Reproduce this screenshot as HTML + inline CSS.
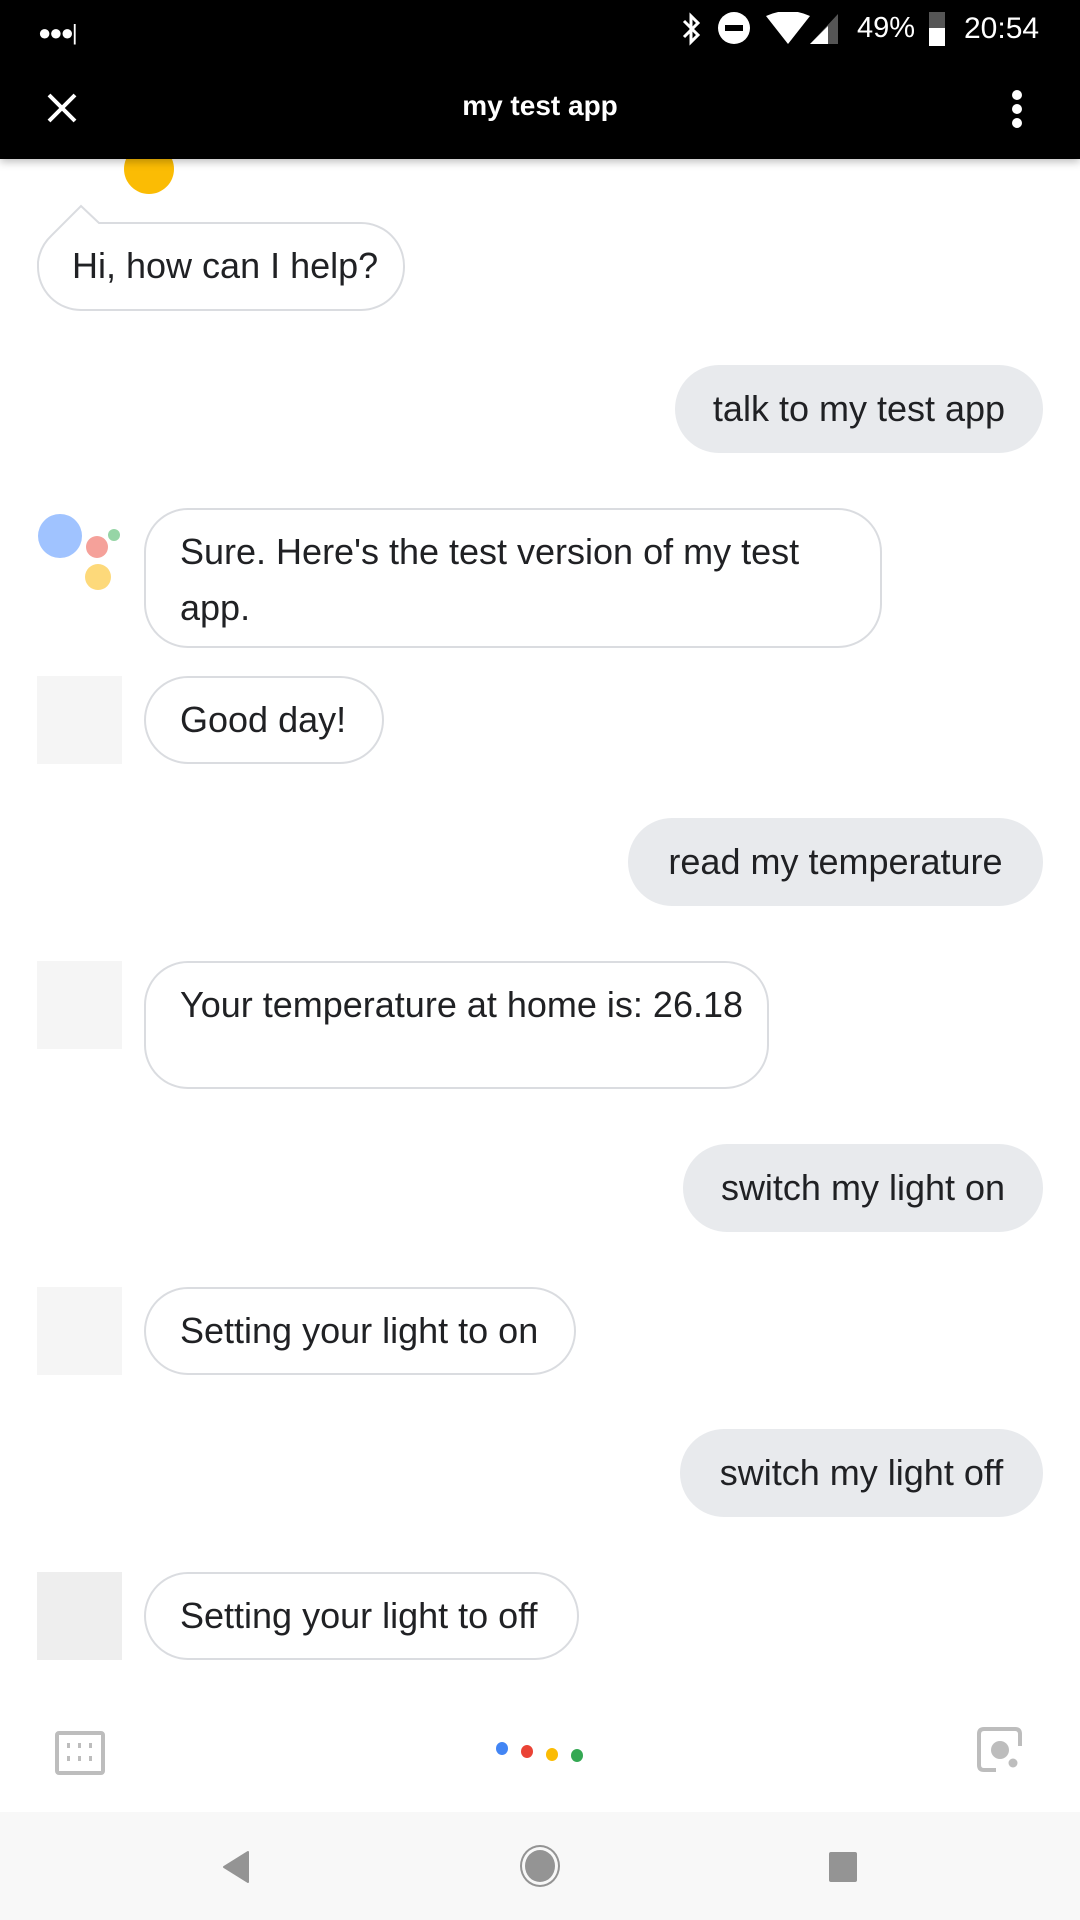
<!DOCTYPE html>
<html><head><meta charset="utf-8">
<style>
*{margin:0;padding:0;box-sizing:border-box}
body{width:1080px;height:1920px;position:relative;background:#fff;font-family:"Liberation Sans",sans-serif;overflow:hidden;color:#202124}
.abs{position:absolute}
.bot{position:absolute;border:2px solid #dadce0;border-radius:44px;background:#fff;font-size:36px;padding:0 34px;line-height:52px;white-space:nowrap}
.user{position:absolute;background:#e8eaed;border-radius:44px;font-size:36px;display:flex;align-items:center;justify-content:center;white-space:nowrap}
.sq{position:absolute;left:37px;width:85px;height:88px;background:#f5f5f5}
.dot{position:absolute;border-radius:50%}
</style></head><body>
<!-- yellow dot -->
<div class="dot" style="left:124px;top:144px;width:50px;height:50px;background:#fbbc04"></div>
<div class="abs" style="left:0;top:0;width:1080px;height:159px;background:#000;box-shadow:0 3px 8px rgba(0,0,0,.25)"></div>
<!-- status -->
<div class="abs" style="left:38px;top:20px;color:#fff;font-size:22px;letter-spacing:-2px">●●●|</div>
<svg class="abs" style="left:676px;top:12px" width="30" height="34" viewBox="0 0 30 34"><path d="M8 9 L22 23 L15 30 L15 4 L22 11 L8 25" fill="none" stroke="#fff" stroke-width="3"/></svg>
<div class="dot" style="left:718px;top:12px;width:32px;height:32px;background:#fff"></div>
<div class="abs" style="left:725px;top:25px;width:18px;height:6px;background:#000"></div>
<svg class="abs" style="left:764px;top:12px" width="48" height="34"><path d="M2 4 Q24 -6 46 4 L24 32 Z" fill="#fff"/></svg>
<svg class="abs" style="left:808px;top:12px" width="32" height="34"><path d="M30 2 L30 32 L2 32 Z" fill="#555"/><path d="M20 14 L20 32 L2 32 Z" fill="#fff"/></svg>
<div class="abs" style="left:857px;top:12px;color:#fff;font-size:29px">49%</div>
<div class="abs" style="left:929px;top:12px;width:16px;height:34px;background:#fff"></div>
<div class="abs" style="left:929px;top:12px;width:16px;height:16px;background:#555"></div>
<div class="abs" style="left:964px;top:12px;color:#fff;font-size:30px">20:54</div>
<!-- header -->
<svg class="abs" style="left:46px;top:92px" width="32" height="32"><path d="M3 3 L29 29 M29 3 L3 29" stroke="#fff" stroke-width="4"/></svg>
<div class="abs" style="left:0;width:1080px;top:90px;text-align:center;color:#fff;font-size:28px;font-weight:bold">my test app</div>
<div class="dot" style="left:1012px;top:90px;width:10px;height:10px;background:#fff"></div>
<div class="dot" style="left:1012px;top:104px;width:10px;height:10px;background:#fff"></div>
<div class="dot" style="left:1012px;top:118px;width:10px;height:10px;background:#fff"></div>
<!-- bubble 1 -->
<svg class="abs" style="left:0;top:0" width="420" height="320"><path d="M81 206 L99 223 L361 223 A43 43 0 0 1 404 266 L404 267 A43 43 0 0 1 361 310 L81 310 A43 43 0 0 1 38 267 L38 262 Q40 246 52 235 Z" fill="#fff" stroke="#dadce0" stroke-width="2"/></svg>
<div class="abs" style="left:72px;top:240px;font-size:36px;line-height:52px;white-space:nowrap">Hi, how can I help?</div>
<div class="user" style="left:675px;top:365px;width:368px;height:88px">talk to my test app</div>
<!-- assistant logo -->
<div class="dot" style="left:38px;top:514px;width:44px;height:44px;background:#a0c3ff"></div>
<div class="dot" style="left:86px;top:536px;width:22px;height:22px;background:#f5a19a"></div>
<div class="dot" style="left:85px;top:564px;width:26px;height:26px;background:#fdd97a"></div>
<div class="dot" style="left:108px;top:529px;width:12px;height:12px;background:#96d5a6"></div>
<div class="bot" style="left:144px;top:508px;width:738px;height:140px;padding-top:14px;line-height:56px">Sure. Here's the test version of my test<br>app.</div>
<div class="sq" style="top:676px"></div>
<div class="bot" style="left:144px;top:676px;width:240px;height:88px;line-height:84px">Good day!</div>
<div class="user" style="left:628px;top:818px;width:415px;height:88px">read my temperature</div>
<div class="sq" style="top:961px"></div>
<div class="bot" style="left:144px;top:961px;width:625px;height:128px;padding-top:16px">Your temperature at home is: 26.18</div>
<div class="user" style="left:683px;top:1144px;width:360px;height:88px">switch my light on</div>
<div class="sq" style="top:1287px"></div>
<div class="bot" style="left:144px;top:1287px;width:432px;height:88px;line-height:84px">Setting your light to on</div>
<div class="user" style="left:680px;top:1429px;width:363px;height:88px">switch my light off</div>
<div class="sq" style="top:1572px;background:#eeeeee"></div>
<div class="bot" style="left:144px;top:1572px;width:435px;height:88px;line-height:84px">Setting your light to off</div>
<!-- bottom -->
<svg class="abs" style="left:55px;top:1731px" width="50" height="44"><rect x="2" y="2" width="46" height="40" rx="2" fill="none" stroke="#bdbdbd" stroke-width="4"/><g fill="#bdbdbd"><rect x="12" y="12" width="3" height="5"/><rect x="23" y="12" width="3" height="5"/><rect x="34" y="12" width="3" height="5"/><rect x="12" y="25" width="3" height="5"/><rect x="23" y="25" width="3" height="5"/><rect x="34" y="25" width="3" height="5"/></g></svg>
<div class="dot" style="left:496px;top:1742px;width:12px;height:13px;background:#4285f4"></div>
<div class="dot" style="left:521px;top:1745px;width:12px;height:13px;background:#ea4335"></div>
<div class="dot" style="left:546px;top:1748px;width:12px;height:13px;background:#fbbc04"></div>
<div class="dot" style="left:571px;top:1749px;width:12px;height:13px;background:#34a853"></div>
<svg class="abs" style="left:976px;top:1726px" width="50" height="50"><path d="M20 44 L8 44 Q3 44 3 39 L3 8 Q3 3 8 3 L39 3 Q44 3 44 8 L44 20" fill="none" stroke="#bdbdbd" stroke-width="4"/><circle cx="24" cy="24" r="9" fill="#bdbdbd"/><circle cx="37" cy="37" r="4.5" fill="#bdbdbd"/></svg>
<div class="abs" style="left:0;top:1812px;width:1080px;height:108px;background:#f8f8f8"></div>
<svg class="abs" style="left:220px;top:1850px" width="32" height="34"><path d="M28 2 L28 32 L4 17 Z" fill="#949494" stroke="#949494" stroke-width="2" stroke-linejoin="round"/></svg>
<div class="dot" style="left:520px;top:1845px;width:40px;height:42px;border:2px solid #949494"></div>
<div class="dot" style="left:525px;top:1850px;width:30px;height:32px;background:#949494"></div>
<div class="abs" style="left:829px;top:1852px;width:28px;height:30px;background:#949494;border-radius:2px"></div>
</body></html>
